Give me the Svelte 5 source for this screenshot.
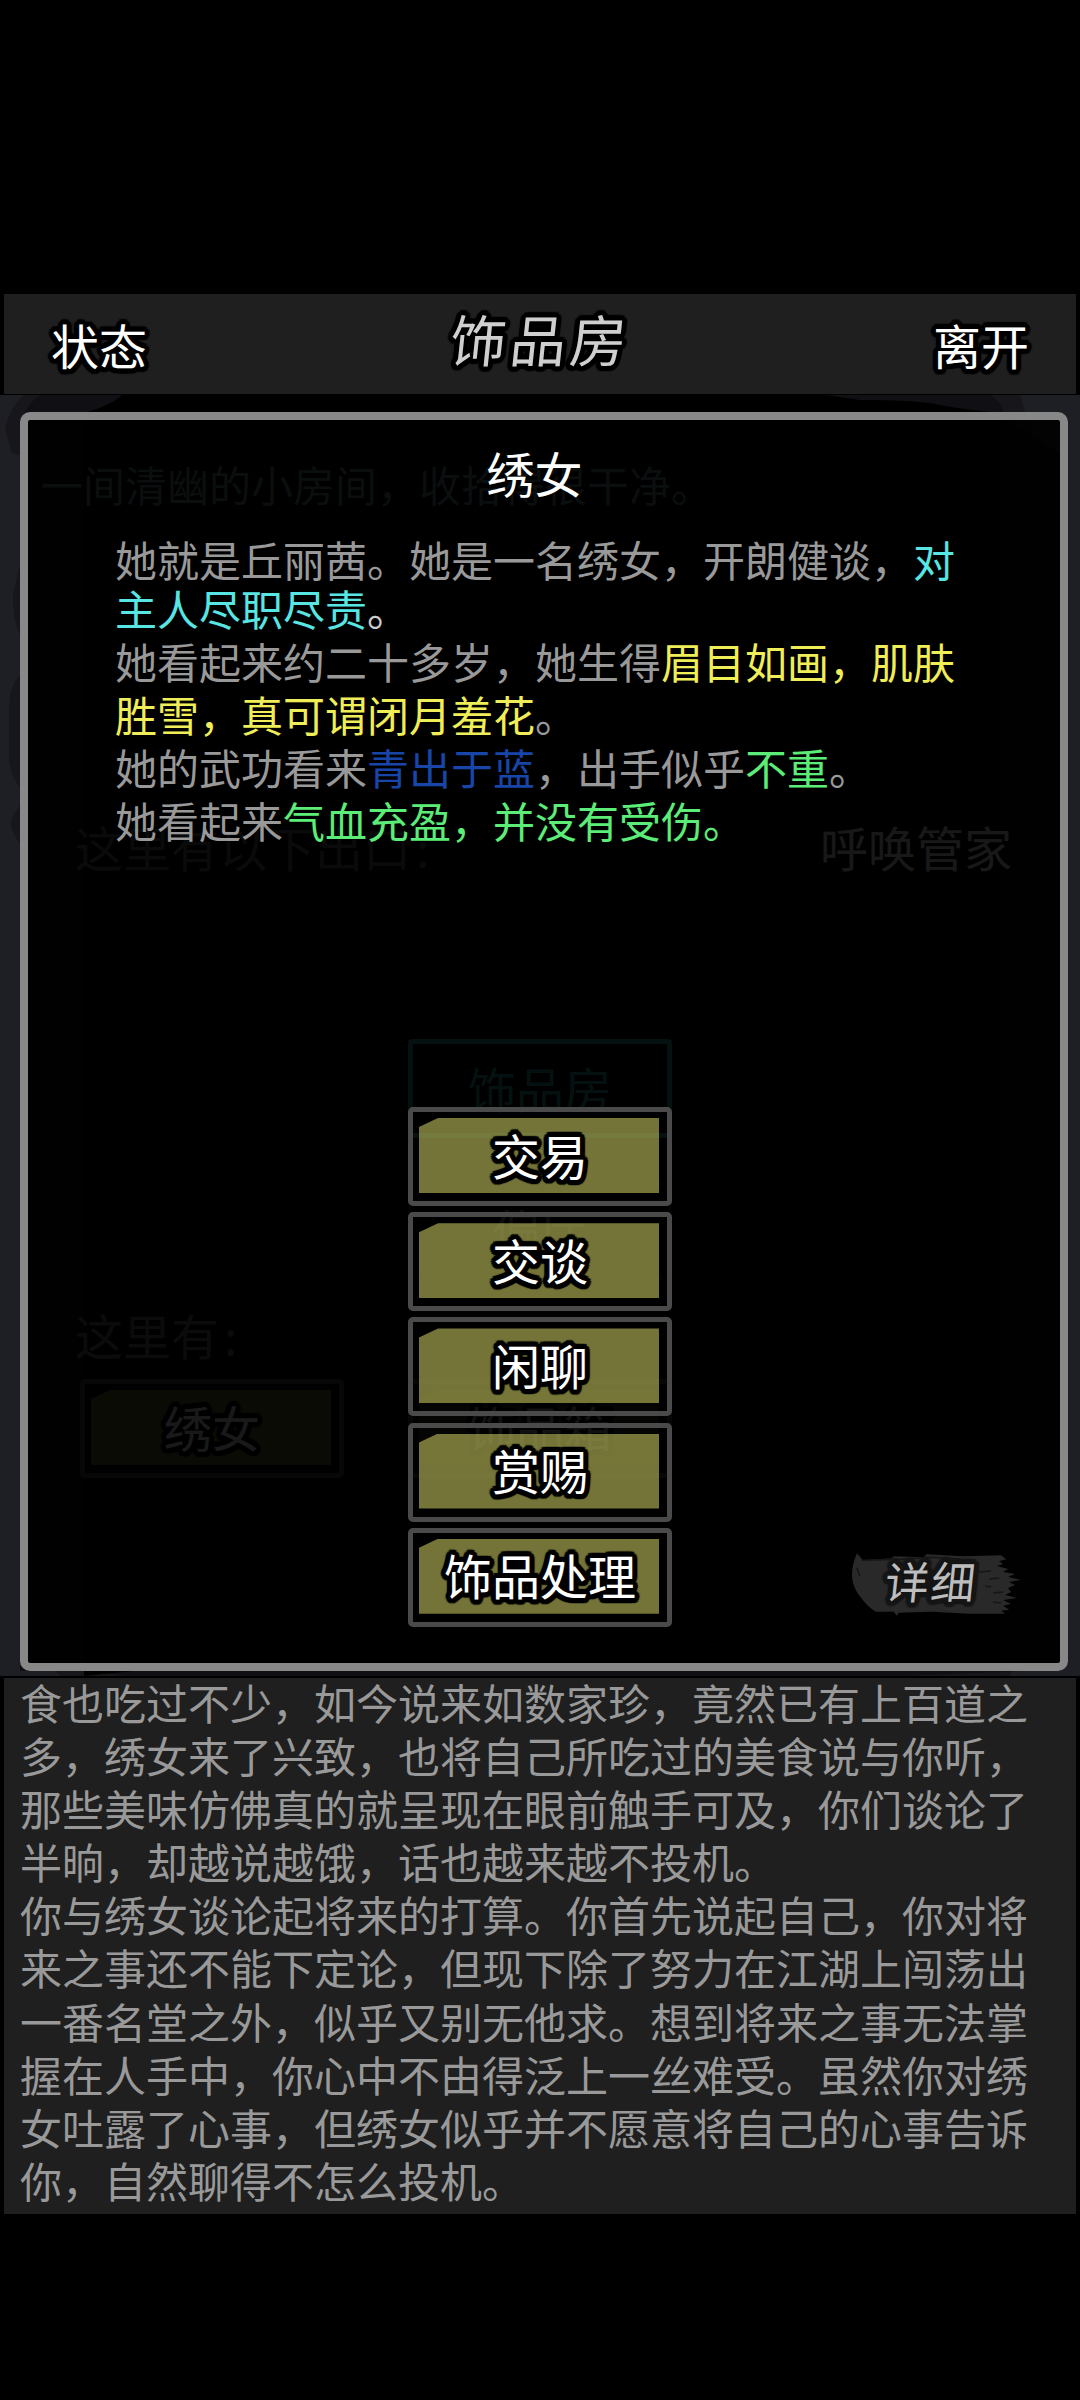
<script lang="ts">
	type Part = { text: string; tone?: string };

	const description: Part[][] = [
		[{ text: '她就是丘丽茜。她是一名绣女，开朗健谈，' }, { text: '对', tone: 'cyan' }],
		[{ text: '主人尽职尽责', tone: 'cyan' }, { text: '。', tone: 'light' }],
		[{ text: '她看起来约二十多岁，她生得' }, { text: '眉目如画，肌肤', tone: 'yellow' }],
		[{ text: '胜雪，真可谓闭月羞花', tone: 'yellow' }, { text: '。' }],
		[
			{ text: '她的武功看来' },
			{ text: '青出于蓝', tone: 'blue' },
			{ text: '，出手似乎' },
			{ text: '不重', tone: 'green' },
			{ text: '。' }
		],
		[{ text: '她看起来' }, { text: '气血充盈，并没有受伤。', tone: 'green' }]
	];

	const actions = ['交易', '交谈', '闲聊', '赏赐', '饰品处理'];

	const log = [
		'食也吃过不少，如今说来如数家珍，竟然已有上百道之',
		'多，绣女来了兴致，也将自己所吃过的美食说与你听，',
		'那些美味仿佛真的就呈现在眼前触手可及，你们谈论了',
		'半晌，却越说越饿，话也越来越不投机。',
		'你与绣女谈论起将来的打算。你首先说起自己，你对将',
		'来之事还不能下定论，但现下除了努力在江湖上闯荡出',
		'一番名堂之外，似乎又别无他求。想到将来之事无法掌',
		'握在人手中，你心中不由得泛上一丝难受。虽然你对绣',
		'女吐露了心事，但绣女似乎并不愿意将自己的心事告诉',
		'你，自然聊得不怎么投机。'
	];
</script>

<div class="screen">
	<header class="topbar">
		<button class="bar-btn outlined" type="button">状态</button>
		<h1 class="brush-text">饰品房</h1>
		<button class="bar-btn outlined" type="button">离开</button>
	</header>

	<main class="scene">
		<svg class="fog" viewBox="0 0 1080 1281" aria-hidden="true">
			<rect width="1080" height="1281" fill="#1e1f24" />
			<path
				d="M24 0H1020L1032 40V1230L1010 1281H60L20 1240V448Q8 434 12 422L20 410V392Q9 380 9 360V310Q10 290 20 280V240Q12 222 13 200L20 170V60L12 58L5 34Q10 12 24 0Z"
				fill="#17171b"
			/>
			<path
				d="M40 0H990Q1004 8 1004 24L1062 60V1276H1022L900 1281H126L90 1276H20V30Q24 12 40 0Z"
				fill="#101014"
			/>
			<path d="M122 0Q112 10 84 18V1281L134 1276H1000V18Q960 14 940 10Q920 5 860 5L826 0Z" fill="#000" />
		</svg>

		<p class="room-text">一间清幽的小房间，收拾得很干净。</p>
		<div class="row">
			<span>这里有以下出口<i>:</i></span>
			<span class="call">呼唤管家</span>
		</div>
		<div class="exits">
			<div class="exit current">饰品房</div>
			<div class="exit">偏厅</div>
		</div>
		<p class="here">这里有<i>:</i></p>
		<div class="occupants">
			<div class="action"><span class="face outlined">绣女</span></div>
			<div class="action dark"><span class="face outlined">饰品箱</span></div>
		</div>

		<section class="dialog">
			<h2>绣女</h2>

			<div class="description">
				{#each description as line}
					<p>{#each line as part}<span class={part.tone}>{part.text}</span>{/each}</p>
				{/each}
			</div>

			<div class="actions">
				{#each actions as action}
					<button class="action" type="button"><span class="face outlined">{action}</span></button>
				{/each}
			</div>

			<button class="detail" type="button">
				<svg viewBox="0 0 174 64" aria-hidden="true">
					<path
						d="M5 1L11 8L40 6L42 4L72 5L75 2L112 4L150 3L155 7L148 9L152 12L146 14L157 17L152 20L164 22L157 25L170 28L158 30L164 33L157 36L160 40L154 43L166 46L152 48L160 52L152 54L158 58L150 59L154 62L118 62L80 60L47 61L45 64L42 60L24 60Q16 55 10 47Q0 36 0 23Q0 12 5 1Z"
						fill="#292929"
					/>
					<path
						d="M10 8L50 7L80 5L110 7M128 20L140 19M138 27L148 26M134 34L140 35M142 41L152 40M142 50L150 51M5 16L8 24"
						fill="none"
						stroke="#161616"
						stroke-width="1.5"
					/>
				</svg>
				<span class="brush-text">详细</span>
			</button>
		</section>
	</main>

	<footer class="log">
		{#each log as line}
			<p>{line}</p>
		{/each}
	</footer>
</div>

<style>
	:global(body) {
		margin: 0;
		background: #000;
	}

	:global(*) {
		box-sizing: border-box;
	}

	.screen {
		width: 1080px;
		height: 2400px;
		padding-top: 294px;
		background: #000;
		color: #999;
		font-family: 'Noto Sans CJK SC', sans-serif;
		font-size: 48px;
		line-height: 1;
		overflow: hidden;
	}

	h1,
	h2,
	p {
		margin: 0;
		font-weight: 400;
		white-space: nowrap;
	}

	i {
		margin-left: 5px;
		font-style: normal;
	}

	button {
		padding: 0;
		border: none;
		background: none;
		color: #fff;
		font: inherit;
	}

	/* a ring of shadows keeps the outline round at stroke ends */
	.outlined,
	.brush-text {
		--o: #000;
		text-shadow:
			5px 0 1px var(--o),
			4.6px 1.9px 1px var(--o),
			3.5px 3.5px 1px var(--o),
			1.9px 4.6px 1px var(--o),
			0 5px 1px var(--o),
			-1.9px 4.6px 1px var(--o),
			-3.5px 3.5px 1px var(--o),
			-4.6px 1.9px 1px var(--o),
			-5px 0 1px var(--o),
			-4.6px -1.9px 1px var(--o),
			-3.5px -3.5px 1px var(--o),
			-1.9px -4.6px 1px var(--o),
			0 -5px 1px var(--o),
			1.9px -4.6px 1px var(--o),
			3.5px -3.5px 1px var(--o),
			4.6px -1.9px 1px var(--o),
			0 0 3px var(--o);
	}

	.topbar {
		display: grid;
		grid-template-columns: 1fr auto 1fr;
		align-items: center;
		height: 101px;
		margin: 0 4px;
		padding: 0 47px;
		background: #1f1f1f;
		border-bottom: 1px solid #000;
	}

	.bar-btn {
		justify-self: start;
		color: #fff;
	}

	.bar-btn:last-child {
		justify-self: end;
	}

	.brush-text {
		color: #cfcfcf;
		transform: skewX(-6deg);
	}

	h1.brush-text {
		padding-bottom: 13px;
		font-size: 56px;
		letter-spacing: 4px;
	}

	.scene {
		position: relative;
		height: 1282px;
		padding-top: 68px;
	}

	.fog {
		position: absolute;
		inset: 0;
		width: 100%;
		height: 1281px;
	}

	.room-text,
	.row,
	.exits,
	.here,
	.occupants {
		position: relative;
	}

	.room-text {
		margin-left: 41px;
		color: #6a8c8a;
		font-size: 42px;
	}

	.row {
		display: flex;
		justify-content: space-between;
		margin: 317px 68px 0 75px;
		color: #646468;
	}

	.call {
		color: #f0f0f0;
	}

	.exits {
		display: flex;
		flex-direction: column;
		gap: 43px;
		width: 264px;
		margin: 169px auto 0;
	}

	.exit {
		height: 99px;
		padding-top: 19px;
		border: 5px solid #1c1c1c;
		border-radius: 4px;
		color: #888;
		text-align: center;
	}

	.exit.current {
		border-color: #30b0a6;
		color: #30b0a6;
	}

	.here {
		margin: 30px 0 0 75px;
		color: #747478;
	}

	.occupants {
		display: flex;
		gap: 64px;
		margin: 21px 0 0 80px;
	}

	.action {
		display: block;
		flex: none;
		width: 264px;
		height: 99px;
		padding: 6px 8px 8px 6px;
		border: 5px solid #4a4a4a;
		border-radius: 5px;
	}

	.face {
		display: flex;
		align-items: center;
		justify-content: center;
		height: 75px;
		padding-bottom: 4px;
		padding-left: 2px;
		background: rgba(193, 193, 94, 0.6);
		clip-path: polygon(19px 0, 100% 0, 100% 100%, 0 100%, 0 9px);
		color: #fff;
		white-space: nowrap;
	}

	.dark .face {
		background: #3a3a20;
		color: #aaa;
	}

	.dialog {
		position: absolute;
		inset: 17px 12px 6px 20px;
		background: rgba(0, 0, 0, 0.9);
		border: 8px solid #888;
		border-radius: 10px;
	}

	h2 {
		margin-top: 28px;
		padding-right: 19px;
		color: #fff;
		font-size: 48px;
		text-align: center;
	}

	.description {
		margin: 36px 0 0 87px;
		font-size: 42px;
		line-height: 53px;
	}

	.description p:first-child {
		margin-bottom: -4px;
	}

	.cyan {
		color: #58e6e4;
	}

	.light {
		color: #ccc;
	}

	.yellow {
		color: #f0ee58;
	}

	.blue {
		color: #1746a8;
	}

	.green {
		color: #5cec78;
	}

	.actions {
		display: flex;
		flex-direction: column;
		gap: 6.2px;
		width: 264px;
		margin: 261px 0 0 380px;
	}

	.detail {
		position: absolute;
		right: 35px;
		bottom: 47px;
		display: grid;
		place-items: center;
		width: 173px;
		height: 64px;
	}

	.detail svg {
		grid-area: 1 / 1;
		width: 173px;
		height: 64px;
	}

	.detail .brush-text {
		--o: #161616;
		grid-area: 1 / 1;
		padding: 0 16px 8px 0;
		color: #bdbdbd;
		font-size: 44px;
		letter-spacing: 2px;
	}

	.log {
		height: 536px;
		margin: 1px 4px 0;
		padding-left: 16px;
		background: #1f1f1f;
		font-size: 42px;
		line-height: 53.1px;
	}

	.log p {
		position: relative;
		top: -3px;
	}
</style>
